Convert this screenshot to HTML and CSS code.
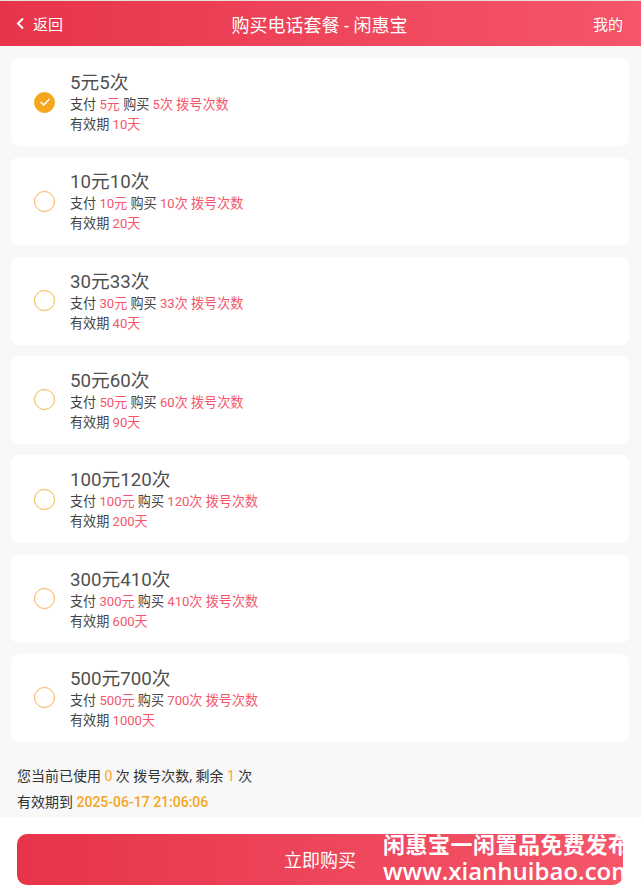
FILE: index.html
```html
<!DOCTYPE html>
<html lang="zh-CN">
<head>
    <meta charset="UTF-8">
    <meta name="viewport" content="width=device-width, initial-scale=1.0">
    <title>购买电话套餐 - 闲惠宝</title>
    <link rel="stylesheet" href="styles.css">
</head>
<body>
    <div class="page">
        <div class="header">
            <div class="back">
                <svg width="9" height="13" viewBox="0 0 9 13"><polyline points="7,1.5 2,6.5 7,11.5" fill="none" stroke="#fff" stroke-width="2"/></svg>
                <span>返回</span>
            </div>
            <div class="title">购买电话套餐 - 闲惠宝</div>
            <div class="mine">我的</div>
        </div>

        <div class="plans">
            <div class="plan active">
                <div class="radio">
                    <svg width="12" height="10" viewBox="0 0 12 10"><polyline points="1.5,5 4.8,8 10.5,2" fill="none" stroke="#fff" stroke-width="1.6"/></svg>
                </div>
                <div class="info">
                    <div class="name">5元5次</div>
                    <div class="line">支付 <em>5元</em> 购买 <em>5次 拨号次数</em></div>
                    <div class="line">有效期 <em>10天</em></div>
                </div>
            </div>
            <div class="plan">
                <div class="radio"></div>
                <div class="info">
                    <div class="name">10元10次</div>
                    <div class="line">支付 <em>10元</em> 购买 <em>10次 拨号次数</em></div>
                    <div class="line">有效期 <em>20天</em></div>
                </div>
            </div>
            <div class="plan">
                <div class="radio"></div>
                <div class="info">
                    <div class="name">30元33次</div>
                    <div class="line">支付 <em>30元</em> 购买 <em>33次 拨号次数</em></div>
                    <div class="line">有效期 <em>40天</em></div>
                </div>
            </div>
            <div class="plan">
                <div class="radio"></div>
                <div class="info">
                    <div class="name">50元60次</div>
                    <div class="line">支付 <em>50元</em> 购买 <em>60次 拨号次数</em></div>
                    <div class="line">有效期 <em>90天</em></div>
                </div>
            </div>
            <div class="plan">
                <div class="radio"></div>
                <div class="info">
                    <div class="name">100元120次</div>
                    <div class="line">支付 <em>100元</em> 购买 <em>120次 拨号次数</em></div>
                    <div class="line">有效期 <em>200天</em></div>
                </div>
            </div>
            <div class="plan">
                <div class="radio"></div>
                <div class="info">
                    <div class="name">300元410次</div>
                    <div class="line">支付 <em>300元</em> 购买 <em>410次 拨号次数</em></div>
                    <div class="line">有效期 <em>600天</em></div>
                </div>
            </div>
            <div class="plan">
                <div class="radio"></div>
                <div class="info">
                    <div class="name">500元700次</div>
                    <div class="line">支付 <em>500元</em> 购买 <em>700次 拨号次数</em></div>
                    <div class="line">有效期 <em>1000天</em></div>
                </div>
            </div>
        </div>

        <div class="usage">
            <div>您当前已使用 <b>0</b> 次 拨号次数, 剩余 <b>1</b> 次</div>
            <div>有效期到 <b class="date">2025-06-17 21:06:06</b></div>
        </div>

        <div class="footer">
            <div class="buy">
                <span>立即购买</span>
                <div class="mark">
                    <div class="mark-cn">闲惠宝一闲置品免费发布</div>
                    <div class="mark-url">www.xianhuibao.com</div>
                </div>
            </div>
        </div>
    </div>
</body>
</html>
```

FILE: styles.css
```css
* {
    box-sizing: border-box;
}

body {
    margin: 0;
    font-family: Roboto, "Noto Sans CJK SC", sans-serif;
    background-color: #f8f8f8;
    color: #333;
}

.page {
    display: flex;
    flex-direction: column;
    min-height: 895px;
}

.header {
    height: 46px;
    border-top: 1px solid #e2e2e2;
    background: linear-gradient(90deg, #e7344a 0%, #f5566a 100%);
    color: #fff;
    display: flex;
    align-items: center;
    justify-content: space-between;
    padding: 0 18px 0 16px;
}

.back {
    display: flex;
    align-items: center;
    gap: 8px;
    font-size: 15px;
    width: 80px;
}

.title {
    font-size: 18px;
}

.mine {
    font-size: 15px;
    width: 80px;
    text-align: right;
}

.plans {
    padding: 12px 12px 0 11px;
    display: flex;
    flex-direction: column;
    gap: 11.33px;
}

.plan {
    background: #fff;
    border-radius: 8px;
    height: 88px;
    display: flex;
    align-items: center;
    padding-left: 23px;
}

.radio {
    width: 21px;
    height: 21px;
    border-radius: 50%;
    border: 1px solid #f6b444;
    margin-right: 15px;
    display: flex;
    align-items: center;
    justify-content: center;
    flex-shrink: 0;
}

.plan.active .radio {
    background: #f4a71d;
    border-color: #f4a71d;
}

.info {
    margin-top: 2px;
}

.name {
    font-size: 18.7px;
    color: #505050;
    line-height: 24px;
}

.line {
    font-size: 13.1px;
    line-height: 20px;
    color: #444;
}

.line em {
    font-style: normal;
    color: #f5566b;
}

.usage {
    padding: 21px 17px 0;
    font-size: 14px;
    line-height: 26px;
    color: #333;
    height: 75px;
}

.usage b {
    font-weight: normal;
    color: #f5a623;
}

.usage b.date {
    font-weight: 500;
}

.footer {
    flex: 1;
    background: #fff;
    padding: 17px 18px 10px 17px;
}

.buy {
    position: relative;
    overflow: hidden;
    height: 51px;
    border-radius: 10px;
    background: linear-gradient(90deg, #e7344a 0%, #f5566a 100%);
    color: #fff;
    font-size: 18px;
    display: flex;
    align-items: center;
    justify-content: center;
}

.mark {
    position: absolute;
    left: 366px;
    top: -4px;
    white-space: nowrap;
    color: #fff;
    font-weight: bold;
    font-family: "Noto Sans CJK SC", "Open Sans", sans-serif;
}

.mark-cn {
    font-size: 22px;
    line-height: 27px;
    letter-spacing: 0.5px;
}

.mark-url {
    font-family: "Open Sans", sans-serif;
    font-weight: 600;
    font-size: 24px;
    line-height: 28px;
}
```
